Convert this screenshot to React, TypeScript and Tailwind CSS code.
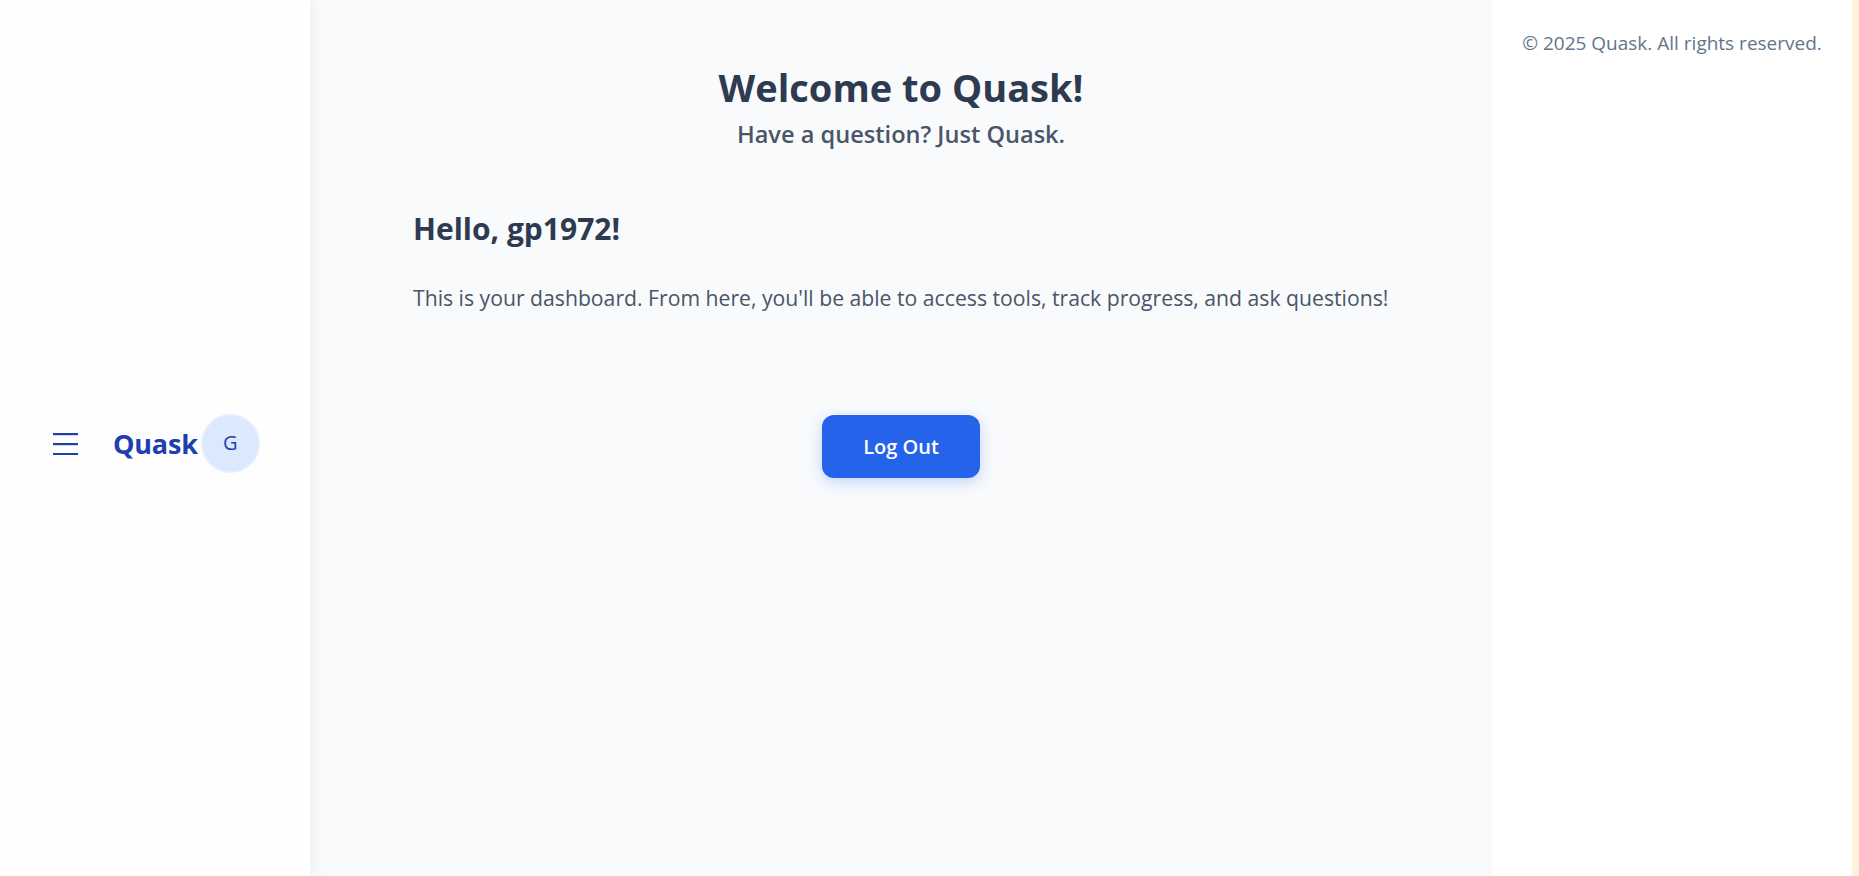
import React from "react";

export default function App() {
  return (
    <div
      className="flex h-[876px] w-full overflow-hidden bg-white"
      style={{ fontFamily: '"Segoe UI", "Open Sans", "Noto Sans", sans-serif' }}
    >
      <aside className="relative z-10 flex w-[310px] shrink-0 items-center bg-[#fefefe] shadow-[2px_0_14px_rgba(0,0,0,0.06)]">
        <div className="flex items-center pl-[53px] pt-[10px]">
          <svg width="25" height="24" viewBox="0 0 25 24" className="text-[#1e40af]">
            <rect x="0" y="2" width="25" height="2.2" fill="currentColor" />
            <rect x="0" y="12" width="25" height="2.2" fill="currentColor" />
            <rect x="0" y="22" width="25" height="2.2" fill="currentColor" />
          </svg>
          <span className="ml-[35px] text-[27px] font-bold leading-none tracking-[-0.2px] text-[#1e40af]">Quask</span>
          <div className="ml-[3px] flex h-[59px] w-[59px] items-center justify-center rounded-full border-2 border-[#e6eeff] bg-[#dbe8fe] text-[20px] font-medium text-[#1e40af]">
            G
          </div>
        </div>
      </aside>

      <main className="flex w-[1182px] shrink-0 flex-col items-center bg-[#f8fafc] pt-[63px]">
        <h1 className="text-[38px] font-bold leading-[48px] text-[#2d3a4f]">Welcome to Quask!</h1>
        <p className="mt-[8px] text-[23.6px] font-semibold leading-[30px] text-[#4a5568]">Have a question? Just Quask.</p>

        <div className="mt-[60px] w-[976px]">
          <h2 className="text-[30px] font-bold leading-[40px] text-[#2d3a4f]">Hello, gp1972!</h2>
          <p className="mt-[34px] text-[21.2px] leading-[30px] text-[#4a5568]">
            This is your dashboard. From here, you'll be able to access tools, track progress, and ask questions!
          </p>
        </div>

        <button className="mt-[102px] h-[63px] w-[158px] rounded-[12px] bg-[#2563eb] text-[20px] font-semibold text-white shadow-[0_4px_14px_rgba(37,99,235,0.25)]">
          Log Out
        </button>
      </main>

      <footer className="flex w-[360px] shrink-0 justify-center bg-white pt-[31px]">
        <p className="text-[19px] leading-[24px] text-[#64748b]">© 2025 Quask. All rights reserved.</p>
      </footer>
      <div className="w-[7px] shrink-0 bg-[#fef2dc]" />
    </div>
  );
}
